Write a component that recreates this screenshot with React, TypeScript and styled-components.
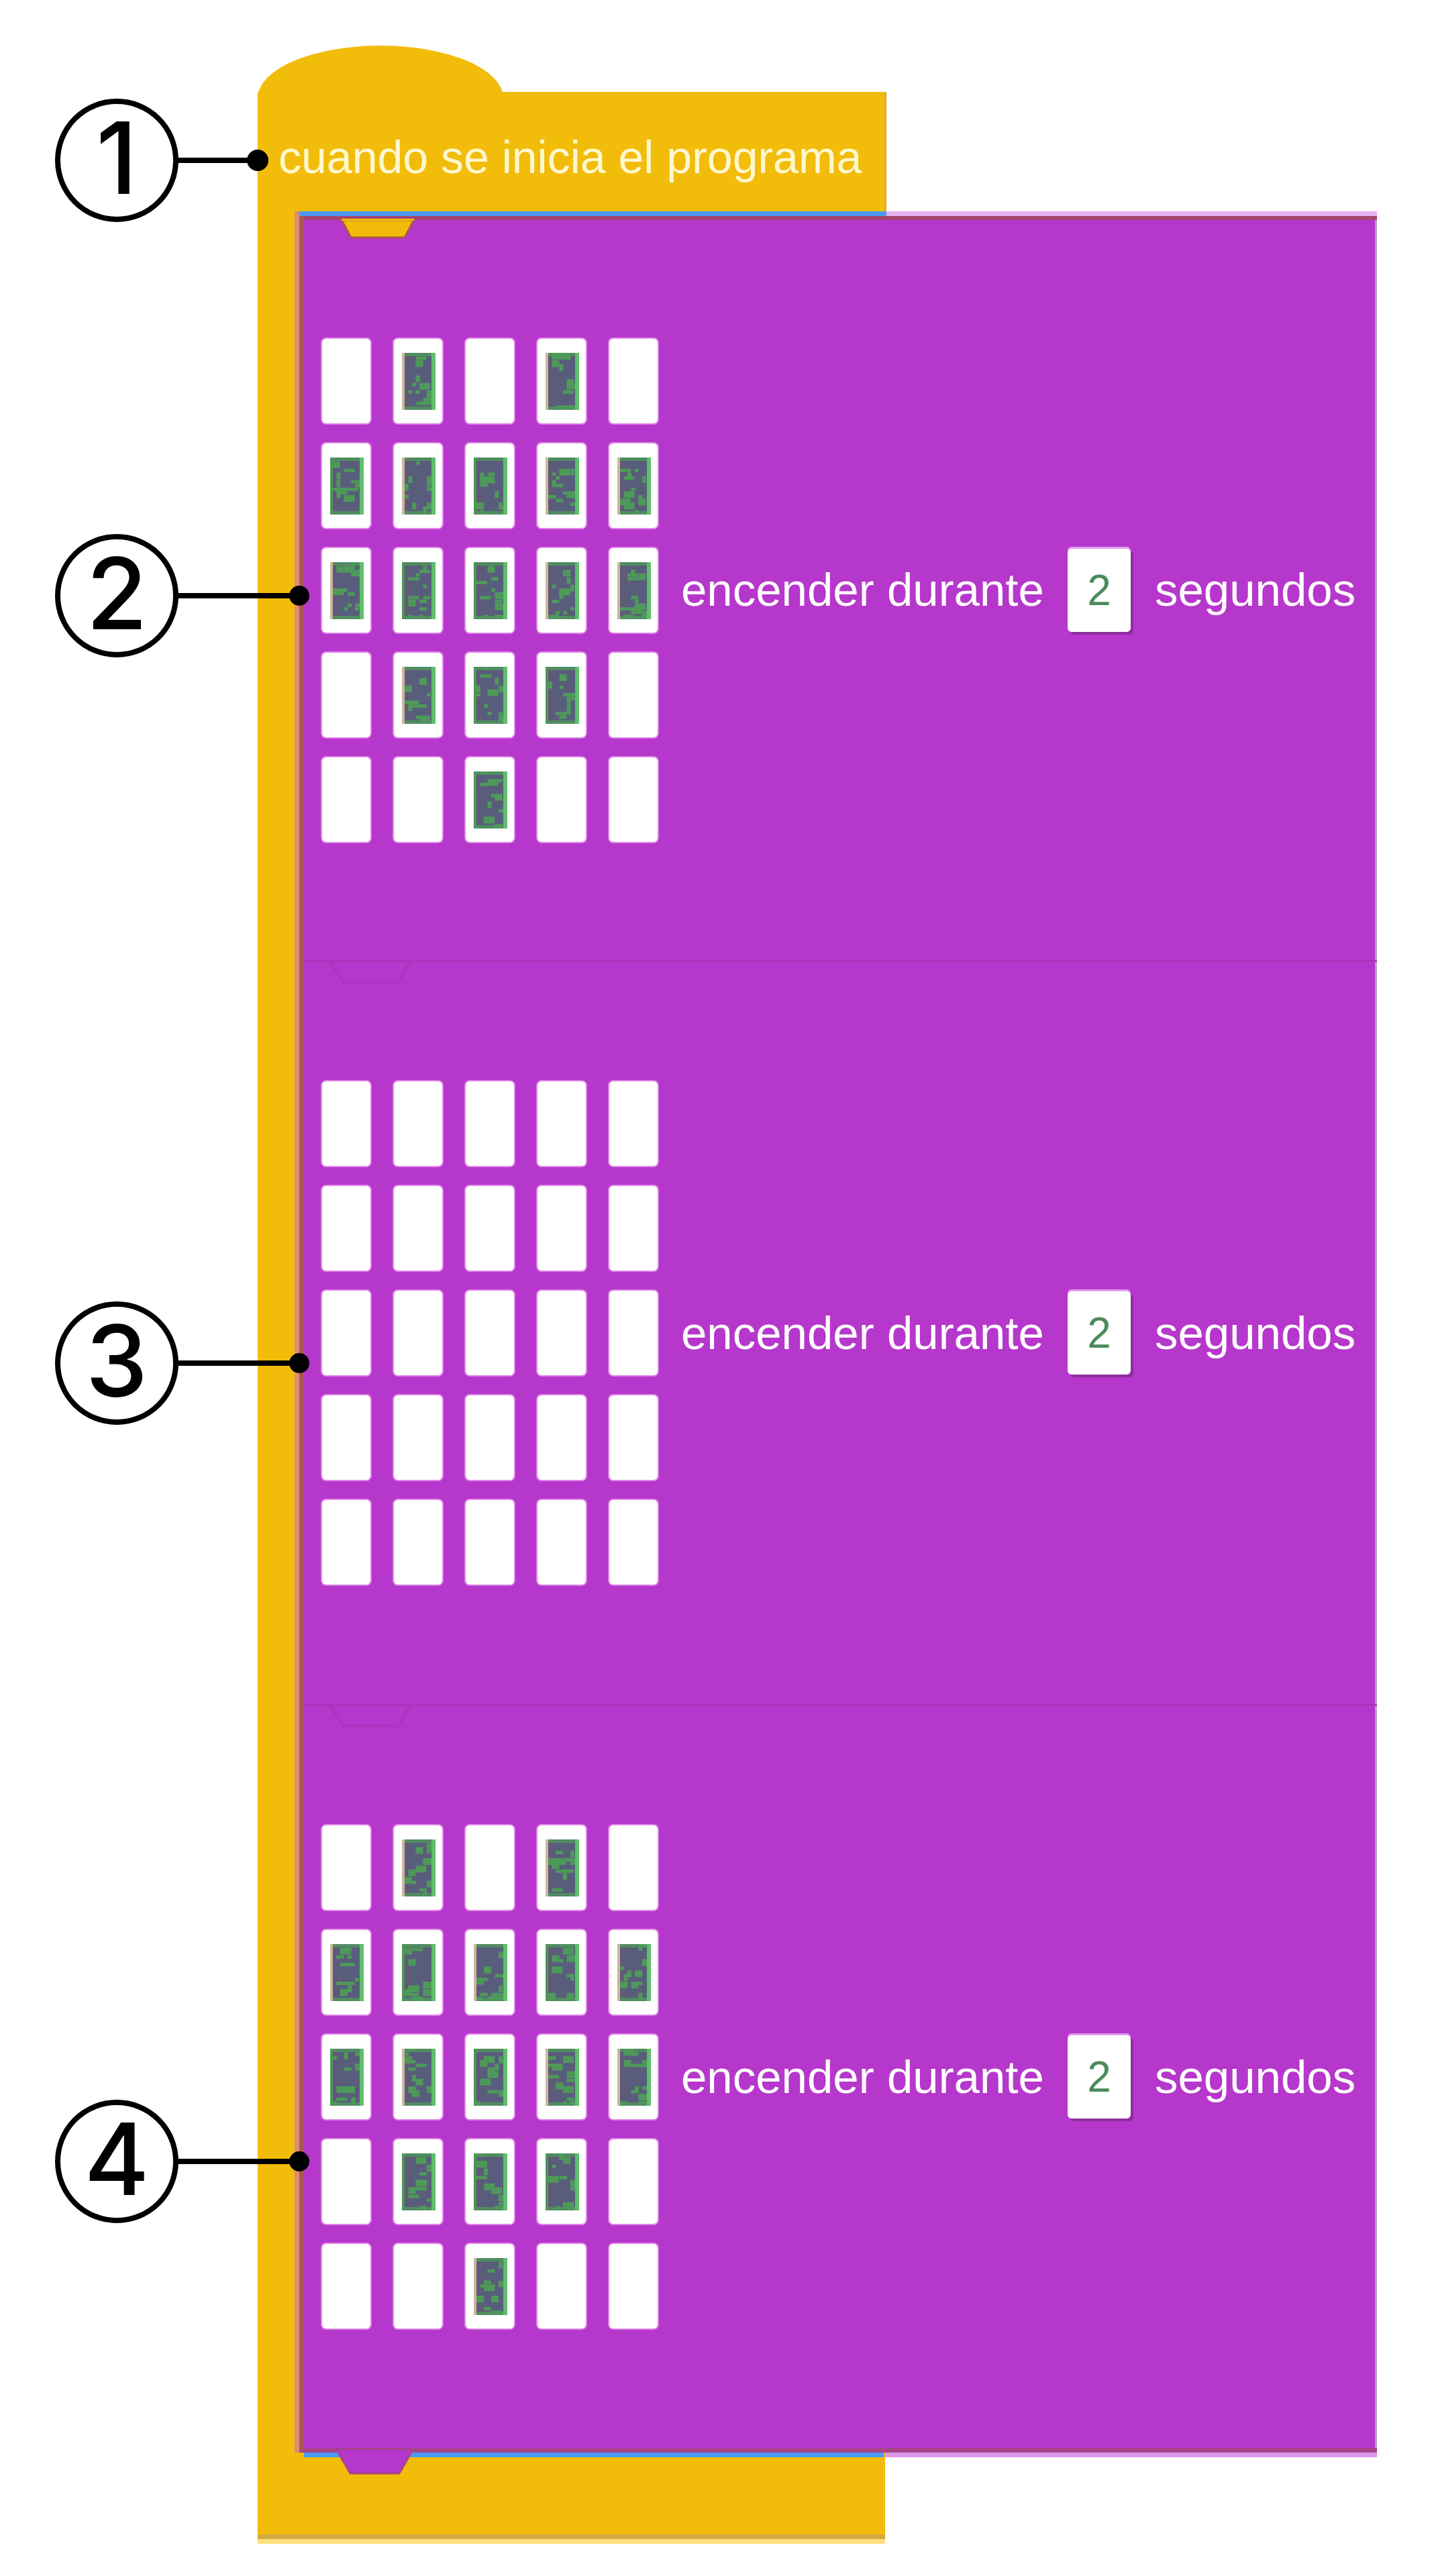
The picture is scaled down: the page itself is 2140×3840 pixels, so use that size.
import React from 'react';
import styled, { createGlobalStyle } from 'styled-components';

const YELLOW = '#f2bc0a';
const PURPLE = '#b637cb';

const HEART = [
  [0, 1, 0, 1, 0],
  [1, 1, 1, 1, 1],
  [1, 1, 1, 1, 1],
  [0, 1, 1, 1, 0],
  [0, 0, 1, 0, 0],
];
const BLANK = HEART.map((r) => r.map(() => 0));

interface StepData {
  id: number;
  label: number;
  leds: number[][];
  seconds: number;
  calloutCenter: number;
}

const steps: StepData[] = [
  { id: 1, label: 2, leds: HEART, seconds: 2, calloutCenter: 566 },
  { id: 2, label: 3, leds: BLANK, seconds: 2, calloutCenter: 601 },
  { id: 3, label: 4, leds: HEART, seconds: 2, calloutCenter: 682 },
];

const GlobalStyle = createGlobalStyle`
  html, body {
    margin: 0;
    padding: 0;
    background: #ffffff;
  }
  body {
    font-family: "Liberation Sans", Arial, sans-serif;
  }
`;

const Page = styled.div`
  width: 2140px;
  height: 3840px;
  overflow: hidden;
  background: #ffffff;
  padding: 137px 0 0 384px;
  box-sizing: border-box;
`;

const Script = styled.div`
  display: flex;
  flex-direction: column;
  width: 1668px;
`;

const Hat = styled.div`
  position: relative;
  width: 937px;
  height: 178px;
  background: ${YELLOW};
  box-sizing: border-box;
  padding: 16px 0 0 31px;
  display: flex;
  align-items: center;
  box-shadow: inset -3px 0 0 #e0ac20;

  &::before {
    content: '';
    position: absolute;
    left: 0;
    top: -69px;
    width: 366px;
    height: 156px;
    border-radius: 50%;
    background: ${YELLOW};
  }
`;

const HatText = styled.span`
  position: relative;
  font-size: 68px;
  line-height: 1;
  color: #fff8cf;
  white-space: nowrap;
`;

const Body = styled.div`
  display: flex;
`;

const CBar = styled.div`
  width: 62px;
  flex: none;
  background: ${YELLOW};
  box-shadow: inset -7px 0 0 #de8c78;
`;

const Stack = styled.div`
  position: relative;
  width: 1599px;
  border-top: 7px solid #e6b0f2;
  border-left: 7px solid #a9594b;
  border-bottom: 7px solid #a8448a;
  box-shadow: 0 7px 0 #dc98ea;

  &::before {
    content: '';
    position: absolute;
    top: -7px;
    left: -7px;
    width: 875px;
    height: 7px;
    background: #4a9bf6;
  }
`;

const Block = styled.div<{ $first?: boolean }>`
  position: relative;
  height: 1109px;
  box-sizing: border-box;
  background: ${PURPLE};
  border-top: ${(p) => (p.$first ? '6px solid #a4466e' : '3px solid #a935bc')};
  padding-left: 27px;
  display: flex;
  align-items: center;
  box-shadow: inset -3px 0 0 #b89cc4;
`;

const Grid = styled.div`
  display: grid;
  grid-template-columns: repeat(5, 72px);
  grid-auto-rows: 126px;
  column-gap: 35px;
  row-gap: 30px;
`;

const Cell = styled.div`
  background: #ffffff;
  border-radius: 6px;
  padding: 21px 10px 20px 12px;
  box-sizing: border-box;
  box-shadow: 0 0 0 2px rgba(255, 200, 255, 0.55);
`;

const LedSvg = styled.svg`
  display: block;
  width: 50px;
  height: 85px;
`;

const Words = styled.span`
  font-size: 69px;
  line-height: 1;
  color: #ffffff;
  white-space: nowrap;
`;

const Phrase = styled(Words)`
  margin-left: 35px;
`;

const NumberBox = styled.div`
  width: 94px;
  height: 124px;
  margin: 0 36px 0 35px;
  background: #ffffff;
  border-radius: 6px;
  box-shadow: 4px 4px 0 rgba(110, 40, 120, 0.55), 0 -3px 0 rgba(230, 170, 240, 0.9);
  display: flex;
  align-items: center;
  justify-content: center;
  font-size: 64px;
  color: #4a8a5c;
`;

const Foot = styled.div`
  position: relative;
  width: 935px;
  height: 122px;
  background: ${YELLOW};
  border-bottom: 7px solid #d3aa40;
  box-shadow: 0 7px 0 #ffe07e;

  &::before {
    content: '';
    position: absolute;
    top: 0;
    left: 69px;
    right: 2px;
    height: 7px;
    background: #4a9bf6;
  }
`;

const TabSvg = styled.svg<{ $left: number; $top: number }>`
  position: absolute;
  left: ${(p) => p.$left}px;
  top: ${(p) => p.$top}px;
  overflow: visible;
`;

const Callout = styled.div<{ $left: number; $top: number }>`
  position: absolute;
  left: ${(p) => p.$left}px;
  top: ${(p) => p.$top}px;
  display: flex;
  align-items: center;
  z-index: 2;
`;

const Circle = styled.div`
  width: 184px;
  height: 184px;
  border: 8px solid #000000;
  border-radius: 50%;
  box-sizing: border-box;
  background: #ffffff;
  display: flex;
  align-items: center;
  justify-content: center;
  font-family: Inter, "Open Sans", sans-serif;
  font-weight: 500;
  font-size: 148px;
  line-height: 1;
  color: #000000;
  padding-bottom: 6px;
`;

const Leader = styled.div<{ $reach: number }>`
  width: ${(p) => p.$reach}px;
  height: 8px;
  background: #000000;
  margin-left: -2px;
`;

const Dot = styled.div<{ $size: number }>`
  width: ${(p) => p.$size}px;
  height: ${(p) => p.$size}px;
  border-radius: 50%;
  background: #000000;
  margin-left: -2px;
`;

function rng(seed: number) {
  let a = seed;
  return () => {
    a |= 0;
    a = (a + 0x6d2b79f5) | 0;
    let t = Math.imul(a ^ (a >>> 15), 1 | a);
    t = (t + Math.imul(t ^ (t >>> 7), 61 | t)) ^ t;
    return ((t ^ (t >>> 14)) >>> 0) / 4294967296;
  };
}

const LitLed: React.FC<{ seed: number }> = ({ seed }) => {
  const r = rng(seed);
  const specks = Array.from({ length: 12 }, () => ({
    x: 4 + Math.floor(r() * 7) * 5.5,
    y: Math.floor(r() * 15) * 5.6,
    w: 6 + Math.floor(r() * 3) * 5,
    h: 5 + Math.floor(r() * 2) * 5,
  }));
  const leftTan = r() > 0.5;
  return (
    <LedSvg viewBox="0 0 50 85">
      <rect width="50" height="85" fill="#595d7c" />
      <rect x="0" y="0" width="4" height="85" fill={leftTan ? '#c9b89e' : '#4e9558'} />
      <rect x="4" y="0" width="8" height="85" fill="#605a77" />
      {specks.map((s, i) => (
        <rect key={i} x={s.x} y={s.y} width={s.w} height={s.h} fill="#4e995a" />
      ))}
      <rect x="4" y="0" width="42" height="5" fill="#4e995a" opacity="0.8" />
      <rect x="4" y="80" width="42" height="5" fill="#4e995a" opacity="0.8" />
      <rect x="44" y="0" width="6" height="85" fill="#5fbd6c" />
    </LedSvg>
  );
};

const LedGrid: React.FC<{ leds: number[][]; seed: number }> = ({ leds, seed }) => (
  <Grid>
    {leds.flatMap((row, y) =>
      row.map((on, x) => (
        <Cell key={`${y}-${x}`}>{on ? <LitLed seed={seed * 100 + y * 5 + x + 1} /> : null}</Cell>
      ))
    )}
  </Grid>
);

const Label: React.FC<{ n: number; left: number; top: number; reach: number; dot: number }> = ({
  n,
  left,
  top,
  reach,
  dot,
}) => (
  <Callout $left={left} $top={top}>
    <Circle>{n}</Circle>
    <Leader $reach={reach} />
    <Dot $size={dot} />
  </Callout>
);

const App: React.FC = () => {
  return (
    <>
      <GlobalStyle />
      <Page>
        <Script>
          <Hat>
            <Label n={1} left={-302} top={10} reach={106} dot={32} />
            <HatText>cuando se inicia el programa</HatText>
          </Hat>
          <Body>
            <CBar />
            <Stack>
              {steps.map((step, i) => (
                <Block key={step.id} $first={i === 0}>
                  {i === 0 ? (
                    <TabSvg $left={56} $top={0} width="108" height="27" viewBox="0 0 108 27">
                      <polygon points="0,0 108,0 94,26 14,26" fill={YELLOW} stroke="#a9584c" strokeWidth="3" />
                      <rect x="0" y="-2" width="108" height="3" fill={YELLOW} />
                    </TabSvg>
                  ) : (
                    <TabSvg $left={40} $top={0} width="118" height="32" viewBox="0 0 118 32">
                      <polyline points="0,0 18,30 100,30 118,0" fill="none" stroke="#a934bb" strokeWidth="3" />
                    </TabSvg>
                  )}
                  <Label
                    n={step.label}
                    left={-371}
                    top={step.calloutCenter - (i === 0 ? 6 : 3) - 92}
                    reach={169}
                    dot={30}
                  />
                  <LedGrid leds={step.leds} seed={step.id} />
                  <Phrase>encender durante</Phrase>
                  <NumberBox>{step.seconds}</NumberBox>
                  <Words>segundos</Words>
                </Block>
              ))}
            </Stack>
          </Body>
          <Foot>
            <TabSvg $left={119} $top={-2} width="111" height="35" viewBox="0 0 111 35">
              <polygon points="0,0 111,0 92,33 19,33" fill={PURPLE} stroke="#a8448a" strokeWidth="3" />
              <rect x="1" y="-2" width="109" height="4" fill={PURPLE} />
            </TabSvg>
          </Foot>
        </Script>
      </Page>
    </>
  );
};

export default App;
